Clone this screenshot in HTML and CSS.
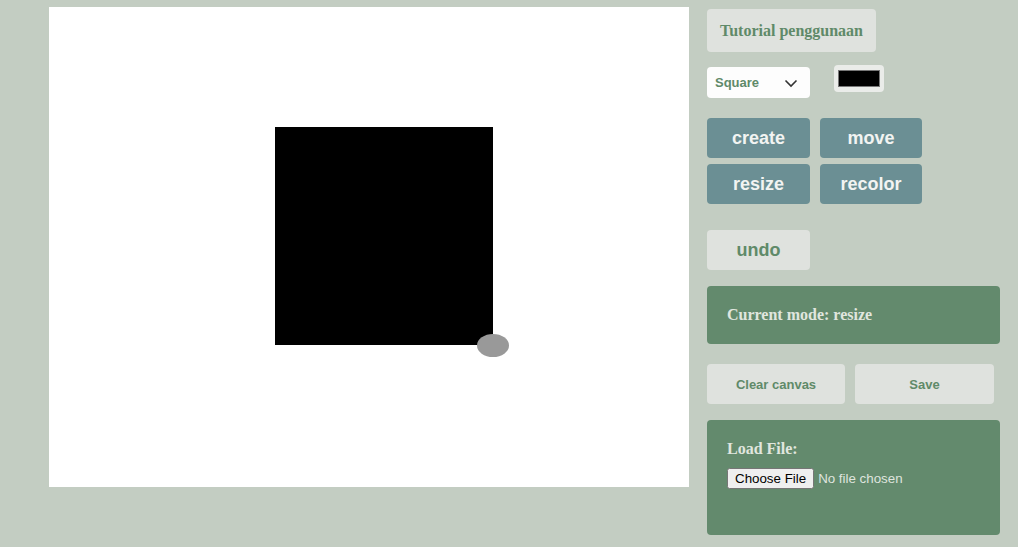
FILE: index.html
```html
<!DOCTYPE html>
<html>
<head>
<meta charset="utf-8">
<link rel="stylesheet" href="styles.css">
</head>
<body>
<div class="app">
  <div class="board">
    <div class="shape"></div>
    <div class="handle"></div>
  </div>
  <div class="panel">
    <button class="tutorial">Tutorial penggunaan</button>
    <div class="tools">
      <div class="select">
        <span>Square</span>
        <svg width="14" height="10" viewBox="0 0 14 10"><path d="M1.5 2.5 L7 8 L12.5 2.5" fill="none" stroke="#333" stroke-width="1.6"/></svg>
      </div>
      <div class="color"><div class="swatch"></div></div>
    </div>
    <div class="modes">
      <button class="mode">create</button>
      <button class="mode">move</button>
      <button class="mode">resize</button>
      <button class="mode">recolor</button>
    </div>
    <button class="undo">undo</button>
    <div class="status">Current mode: resize</div>
    <div class="actions">
      <button class="act clear">Clear canvas</button>
      <button class="act save">Save</button>
    </div>
    <div class="load">
      <div class="load-title">Load File:</div>
      <input type="file" class="file">
    </div>
  </div>
</div>
</body>
</html>
```

FILE: styles.css
```css
html, body { margin: 0; padding: 0; }
body {
  background: #c3cdc2;
  width: 1018px;
  height: 547px;
  overflow: hidden;
}
.app {
  display: flex;
  align-items: flex-start;
  gap: 18px;
  padding: 7px 0 0 49px;
}
.board {
  position: relative;
  width: 640px;
  height: 480px;
  background: #ffffff;
  flex: none;
}
.shape {
  position: absolute;
  left: 226px;
  top: 120px;
  width: 218px;
  height: 218px;
  background: #000;
}
.handle {
  position: absolute;
  left: 428px;
  top: 327px;
  width: 32px;
  height: 23px;
  border-radius: 50%;
  background: #999999;
}
.panel {
  width: 293px;
  display: flex;
  flex-direction: column;
  align-items: flex-start;
}
button {
  border: none;
  cursor: pointer;
  padding: 0;
}
.tutorial {
  margin-top: 2px;
  width: 169px;
  height: 43px;
  border-radius: 4px;
  background: #dfe2de;
  color: #5f8a69;
  font: bold 16px "Liberation Serif", serif;
}
.tools {
  display: flex;
  align-items: flex-start;
  gap: 24px;
  margin-top: 13px;
}
.select {
  margin-top: 2px;
  width: 103px;
  height: 31px;
  box-sizing: border-box;
  background: #fdfdfd;
  border-radius: 4px;
  display: flex;
  align-items: center;
  justify-content: space-between;
  padding: 0 12px 0 8px;
  color: #5f8a69;
  font: bold 13px "Liberation Sans", Arial, sans-serif;
}
.select svg { margin-top: 1px; }
.color {
  width: 50px;
  height: 27px;
  box-sizing: border-box;
  background: #eaece9;
  border-radius: 4px;
  padding: 5px 4px;
}
.swatch {
  width: 100%;
  height: 100%;
  box-sizing: border-box;
  background: #000;
  border: 1px solid #777;
}
.modes {
  display: grid;
  grid-template-columns: 103px 102px;
  grid-auto-rows: 40px;
  column-gap: 10px;
  row-gap: 6px;
  margin-top: 20px;
}
.mode {
  background: #6b8f94;
  color: #f2f4f2;
  border-radius: 4px;
  font: bold 18px "Liberation Sans", Arial, sans-serif;
}
.undo {
  margin-top: 26px;
  width: 103px;
  height: 40px;
  border-radius: 4px;
  background: #dfe2de;
  color: #5f8a69;
  font: bold 18px "Liberation Sans", Arial, sans-serif;
}
.status {
  margin-top: 16px;
  width: 293px;
  height: 58px;
  box-sizing: border-box;
  padding: 0 20px;
  display: flex;
  align-items: center;
  border-radius: 4px;
  background: #638a6d;
  color: #e0e6df;
  font: bold 16px "Liberation Serif", serif;
}
.actions {
  display: flex;
  gap: 10px;
  margin-top: 20px;
}
.act {
  height: 40px;
  border-radius: 4px;
  background: #dfe2de;
  color: #5f8a69;
  font: bold 13px "Liberation Sans", Arial, sans-serif;
}
.clear { width: 138px; }
.save { width: 139px; }
.load {
  margin-top: 16px;
  width: 293px;
  height: 115px;
  box-sizing: border-box;
  padding: 19px 20px 0;
  border-radius: 4px;
  background: #638a6d;
}
.load-title {
  color: #e0e6df;
  font: bold 16px "Liberation Serif", serif;
  line-height: 20px;
}
.file {
  margin-top: 9px;
  color: #dfe4de;
  font: 13.33px "Liberation Sans", Arial, sans-serif;
}
```
